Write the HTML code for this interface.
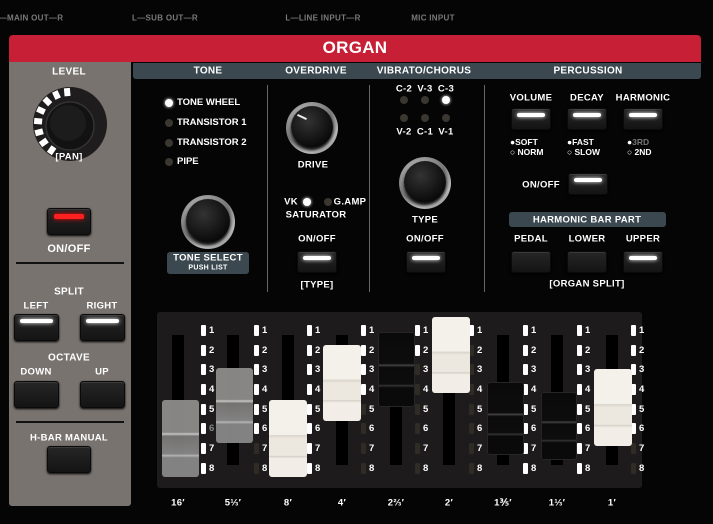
<!DOCTYPE html>
<html><head><meta charset="utf-8"><style>
*{margin:0;padding:0;box-sizing:border-box}
body{width:713px;height:524px;background:#050505;position:relative;overflow:hidden;font-family:"Liberation Sans",sans-serif;font-weight:bold;color:#fff}
.a{position:absolute}
.t{position:absolute;transform:translate(-50%,-50%);white-space:nowrap;font-size:9.5px;letter-spacing:.3px}
.top{color:#7a7a7a;font-size:8px}
.btn{position:absolute;background:linear-gradient(#262626,#141414);border:1px solid #0a0a0a;border-radius:3px;box-shadow:inset 0 1px 0 #3a3a3a,0 1px 2px #000}
.btn.l::after{content:"";position:absolute;left:5px;right:5px;top:4px;height:4px;border-radius:2px;background:#fff;box-shadow:0 0 4px #fff}
.btn.r::after{content:"";position:absolute;left:6px;right:6px;top:5px;height:5px;border-radius:2px;background:#ff2020;box-shadow:0 0 5px #f00}
.led{position:absolute;width:8px;height:8px;border-radius:50%;background:#3a3630;transform:translate(-50%,-50%)}
.led.on{background:#fff;box-shadow:0 0 3px #fff}
.knob{position:absolute;border-radius:50%;transform:translate(-50%,-50%);background:radial-gradient(circle at 40% 35%,#ddd,#777 55%,#bbb 70%,#444);}
.knob::after{content:"";position:absolute;left:5px;top:4px;right:5px;bottom:6px;border-radius:50%;background:radial-gradient(circle at 40% 35%,#333,#0b0b0b 70%);box-shadow:0 2px 3px #000}
.hd{position:absolute;background:#3b4850;border-radius:3px}
.col{position:absolute;top:321px;font-size:9.5px}
.col b{display:block;height:19.7px;line-height:19.7px}
.col i{display:inline-block;width:5px;height:11px;background:#fff;vertical-align:middle;margin-right:3px;border-radius:1px}
.col b.d i{background:#2e2c24}
.slot{position:absolute;top:335px;width:12px;height:130px;background:#000}
.cap{position:absolute;border-radius:3px}
.w{background:linear-gradient(#f4f1ea 0,#f4f1ea 45%,#d9d5cc 46%,#ece8e0 50%,#ece8e0 72%,#d5d1c8 73%,#f2eee7 76%)}
.g{background:linear-gradient(#8e8c8a 0,#8e8c8a 42%,#cfcfcf 44%,#7a7876 47%,#888 70%,#bdbdbd 72%,#888 75%);opacity:.95}
.k{background:linear-gradient(#0a0a0a 0,#0d0d0d 42%,#444 44%,#0b0b0b 47%,#0d0d0d 70%,#333 72%,#0a0a0a 75%);border:1px solid #262626}
</style></head><body>

<div class="t top" style="left:31px;top:18px">—MAIN OUT—R</div>
<div class="t top" style="left:165px;top:18px">L—SUB OUT—R</div>
<div class="t top" style="left:323px;top:18px">L—LINE INPUT—R</div>
<div class="t top" style="left:433px;top:18px">MIC INPUT</div>

<div class="a" style="left:9px;top:35px;width:692px;height:27px;background:#c61f36;border-radius:4px 4px 0 0"></div>
<div class="t" style="left:355px;top:48px;font-size:17px">ORGAN</div>

<div class="a" style="left:9px;top:62px;width:122px;height:444px;background:#79736f;border-radius:0 0 3px 3px"></div>
<div class="hd" style="left:133px;top:63px;width:568px;height:16px;border-radius:0 0 3px 3px"></div>
<div class="t" style="left:208px;top:71px;font-size:10px">TONE</div>
<div class="t" style="left:316px;top:71px;font-size:10px">OVERDRIVE</div>
<div class="t" style="left:424px;top:71px;font-size:10px">VIBRATO/CHORUS</div>
<div class="t" style="left:588px;top:71px;font-size:10px">PERCUSSION</div>

<!-- left panel -->
<div class="t" style="left:69px;top:72px;font-size:10px">LEVEL</div>
<svg class="a" style="left:30px;top:84px" width="80" height="80" viewBox="-40 -40 80 80">
<circle r="37" fill="#1e1c1c"/>
<g stroke-width="6" stroke="#fff">
<line x1="0" y1="-36" x2="0" y2="-28" transform="rotate(-5)"/>
<line x1="0" y1="-36" x2="0" y2="-28" transform="rotate(-25)"/>
<line x1="0" y1="-36" x2="0" y2="-28" transform="rotate(-45)"/>
<line x1="0" y1="-36" x2="0" y2="-28" transform="rotate(-65)"/>
<line x1="0" y1="-36" x2="0" y2="-28" transform="rotate(-85)"/>
<line x1="0" y1="-36" x2="0" y2="-28" transform="rotate(-105)"/>
<line x1="0" y1="-36" x2="0" y2="-28" transform="rotate(-125)"/>
<line x1="0" y1="-36" x2="0" y2="-28" transform="rotate(-145)"/>
</g>
<circle r="24" cy="2" fill="#121212" stroke="#333" stroke-width="1.5"/>
<circle r="18" cy="-1" cx="-2" fill="#1c1c1c"/>
</svg>
<div class="t" style="left:69px;top:157px">[PAN]</div>
<div class="btn r" style="left:47px;top:208px;width:44px;height:27px"></div>
<div class="t" style="left:69px;top:249px;font-size:11px">ON/OFF</div>
<div class="a" style="left:16px;top:262px;width:108px;height:2px;background:#111"></div>
<div class="t" style="left:69px;top:292px;font-size:10px">SPLIT</div>
<div class="t" style="left:36px;top:306px">LEFT</div>
<div class="t" style="left:102px;top:306px">RIGHT</div>
<div class="btn l" style="left:14px;top:314px;width:45px;height:27px"></div>
<div class="btn l" style="left:80px;top:314px;width:45px;height:27px"></div>
<div class="t" style="left:69px;top:358px;font-size:10px">OCTAVE</div>
<div class="t" style="left:36px;top:372px">DOWN</div>
<div class="t" style="left:102px;top:372px">UP</div>
<div class="btn" style="left:14px;top:381px;width:45px;height:27px"></div>
<div class="btn" style="left:80px;top:381px;width:45px;height:27px"></div>
<div class="a" style="left:16px;top:421px;width:108px;height:2px;background:#111"></div>
<div class="t" style="left:69px;top:438px">H-BAR MANUAL</div>
<div class="btn" style="left:47px;top:446px;width:44px;height:27px"></div>

<!-- dividers -->
<div class="a" style="left:267px;top:85px;width:1px;height:207px;background:#666"></div>
<div class="a" style="left:369px;top:85px;width:1px;height:207px;background:#666"></div>
<div class="a" style="left:484px;top:85px;width:1px;height:207px;background:#666"></div>

<!-- tone -->
<div class="led on" style="left:169px;top:103px"></div><div class="a" style="left:177px;top:97px;font-size:9.5px">TONE WHEEL</div>
<div class="led" style="left:169px;top:123px"></div><div class="a" style="left:177px;top:117px;font-size:9.5px">TRANSISTOR 1</div>
<div class="led" style="left:169px;top:143px"></div><div class="a" style="left:177px;top:137px;font-size:9.5px">TRANSISTOR 2</div>
<div class="led" style="left:169px;top:162px"></div><div class="a" style="left:177px;top:156px;font-size:9.5px">PIPE</div>
<div class="knob" style="left:208px;top:222px;width:54px;height:54px"></div>
<div class="hd" style="left:167px;top:252px;width:82px;height:22px"></div>
<div class="t" style="left:208px;top:258px;font-size:9.5px">TONE SELECT</div>
<div class="t" style="left:208px;top:268px;font-size:7px">PUSH LIST</div>

<!-- overdrive -->
<div class="knob" style="left:312px;top:128px;width:52px;height:52px"></div>
<div class="a" style="left:297px;top:116px;width:10px;height:2px;background:#eee;transform:rotate(25deg)"></div>
<div class="t" style="left:313px;top:165px">DRIVE</div>
<div class="t" style="left:291px;top:202px">VK</div>
<div class="led on" style="left:307px;top:202px"></div>
<div class="led" style="left:328px;top:202px"></div>
<div class="t" style="left:350px;top:202px">G.AMP</div>
<div class="t" style="left:316px;top:215px">SATURATOR</div>
<div class="t" style="left:317px;top:239px">ON/OFF</div>
<div class="btn l" style="left:297px;top:251px;width:40px;height:22px"></div>
<div class="t" style="left:317px;top:285px">[TYPE]</div>

<!-- vibrato -->
<div class="t" style="left:404px;top:89px">C-2</div><div class="t" style="left:425px;top:89px">V-3</div><div class="t" style="left:446px;top:89px">C-3</div>
<div class="led" style="left:404px;top:100px"></div><div class="led" style="left:425px;top:100px"></div><div class="led on" style="left:446px;top:100px"></div>
<div class="led" style="left:404px;top:118px"></div><div class="led" style="left:425px;top:118px"></div><div class="led" style="left:446px;top:118px"></div>
<div class="t" style="left:404px;top:132px">V-2</div><div class="t" style="left:425px;top:132px">C-1</div><div class="t" style="left:446px;top:132px">V-1</div>
<div class="knob" style="left:425px;top:183px;width:52px;height:52px"></div>
<div class="t" style="left:425px;top:220px">TYPE</div>
<div class="t" style="left:425px;top:239px">ON/OFF</div>
<div class="btn l" style="left:406px;top:251px;width:40px;height:22px"></div>

<!-- percussion -->
<div class="t" style="left:531px;top:98px">VOLUME</div>
<div class="t" style="left:587px;top:98px">DECAY</div>
<div class="t" style="left:643px;top:98px">HARMONIC</div>
<div class="btn l" style="left:511px;top:108px;width:40px;height:22px"></div>
<div class="btn l" style="left:567px;top:108px;width:40px;height:22px"></div>
<div class="btn l" style="left:623px;top:108px;width:40px;height:22px"></div>
<div class="a" style="left:510px;top:137px;font-size:8.5px;line-height:10px">●︎SOFT<br>○ NORM</div>
<div class="a" style="left:567px;top:137px;font-size:8.5px;line-height:10px">●︎FAST<br>○ SLOW</div>
<div class="a" style="left:627px;top:137px;font-size:8.5px;line-height:10px">●︎<span style="color:#777">3RD</span><br>○ 2ND</div>
<div class="t" style="left:541px;top:185px">ON/OFF</div>
<div class="btn l" style="left:568px;top:173px;width:40px;height:22px"></div>
<div class="hd" style="left:509px;top:212px;width:157px;height:15px"></div>
<div class="t" style="left:587px;top:220px">HARMONIC BAR PART</div>
<div class="t" style="left:531px;top:239px">PEDAL</div>
<div class="t" style="left:587px;top:239px">LOWER</div>
<div class="t" style="left:643px;top:239px">UPPER</div>
<div class="btn" style="left:511px;top:251px;width:40px;height:22px"></div>
<div class="btn" style="left:567px;top:251px;width:40px;height:22px"></div>
<div class="btn l" style="left:623px;top:251px;width:40px;height:22px"></div>
<div class="t" style="left:587px;top:284px">[ORGAN SPLIT]</div>

<!-- drawbars -->
<div class="a" style="left:157px;top:312px;width:485px;height:176px;background:#1d1b1b;border-radius:3px"></div>
<div class="slot" style="left:172px"></div><div class="slot" style="left:227px"></div><div class="slot" style="left:282px"></div>
<div class="slot" style="left:336px"></div><div class="slot" style="left:390px"></div><div class="slot" style="left:443px"></div>
<div class="slot" style="left:497px"></div><div class="slot" style="left:551px"></div><div class="slot" style="left:606px"></div>

<div class="col" style="left:201px"><b><i></i>1</b><b><i></i>2</b><b><i></i>3</b><b><i></i>4</b><b><i></i>5</b><b><i></i><span style="color:#888">6</span></b><b><i></i>7</b><b><i></i>8</b></div>
<div class="col" style="left:254px"><b><i></i>1</b><b><i></i>2</b><b><i></i>3</b><b><i></i>4</b><b><i></i>5</b><b><i></i>6</b><b class="d"><i></i>7</b><b class="d"><i></i>8</b></div>
<div class="col" style="left:307px"><b><i></i>1</b><b><i></i>2</b><b><i></i>3</b><b><i></i>4</b><b><i></i>5</b><b><i></i>6</b><b><i></i>7</b><b><i></i>8</b></div>
<div class="col" style="left:361px"><b><i></i>1</b><b><i></i>2</b><b><i></i>3</b><b><i></i>4</b><b class="d"><i></i>5</b><b class="d"><i></i>6</b><b class="d"><i></i>7</b><b class="d"><i></i>8</b></div>
<div class="col" style="left:415px"><b><i></i>1</b><b><i></i>2</b><b class="d"><i></i>3</b><b class="d"><i></i>4</b><b class="d"><i></i>5</b><b class="d"><i></i>6</b><b class="d"><i></i>7</b><b class="d"><i></i>8</b></div>
<div class="col" style="left:469px"><b><i></i>1</b><b class="d"><i></i>2</b><b class="d"><i></i>3</b><b class="d"><i></i>4</b><b class="d"><i></i>5</b><b class="d"><i></i>6</b><b class="d"><i></i>7</b><b class="d"><i></i>8</b></div>
<div class="col" style="left:523px"><b><i></i>1</b><b><i></i>2</b><b><i></i>3</b><b><i></i>4</b><b><i></i>5</b><b><i></i>6</b><b><i></i>7</b><b><i></i>8</b></div>
<div class="col" style="left:577px"><b><i></i>1</b><b><i></i>2</b><b><i></i>3</b><b><i></i>4</b><b><i></i>5</b><b><i></i>6</b><b><i></i>7</b><b><i></i>8</b></div>
<div class="col" style="left:631px"><b><i></i>1</b><b><i></i>2</b><b><i></i>3</b><b><i></i>4</b><b><i></i>5</b><b><i></i>6</b><b class="d"><i></i>7</b><b class="d"><i></i>8</b></div>

<div class="cap g" style="left:162px;top:400px;width:37px;height:77px"></div>
<div class="cap g" style="left:216px;top:368px;width:37px;height:75px"></div>
<div class="cap w" style="left:269px;top:400px;width:38px;height:77px"></div>
<div class="cap w" style="left:323px;top:345px;width:38px;height:76px"></div>
<div class="cap k" style="left:378px;top:332px;width:37px;height:75px"></div>
<div class="cap w" style="left:432px;top:317px;width:38px;height:76px"></div>
<div class="cap k" style="left:487px;top:382px;width:37px;height:73px"></div>
<div class="cap k" style="left:541px;top:392px;width:36px;height:68px"></div>
<div class="cap w" style="left:594px;top:369px;width:38px;height:77px"></div>

<div class="t" style="left:178px;top:503px">16′</div>
<div class="t" style="left:233px;top:503px">5⅓′</div>
<div class="t" style="left:288px;top:503px">8′</div>
<div class="t" style="left:342px;top:503px">4′</div>
<div class="t" style="left:396px;top:503px">2⅔′</div>
<div class="t" style="left:449px;top:503px">2′</div>
<div class="t" style="left:503px;top:503px">1⅗′</div>
<div class="t" style="left:557px;top:503px">1⅓′</div>
<div class="t" style="left:612px;top:503px">1′</div>
</body></html>
